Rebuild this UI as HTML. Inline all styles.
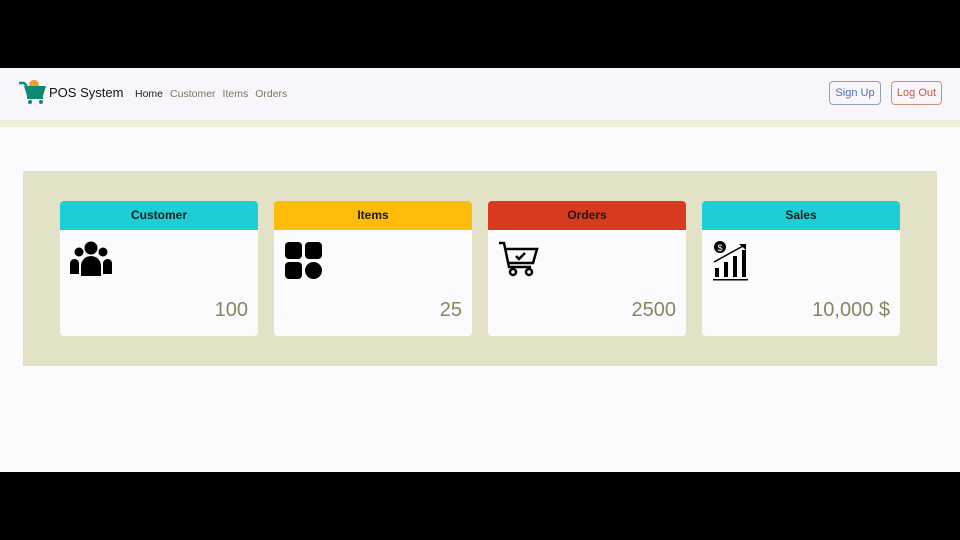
<!DOCTYPE html>
<html><head><meta charset="utf-8"><style>
*{box-sizing:border-box;margin:0;padding:0}
body{width:960px;height:540px;background:#000;font-family:"Liberation Sans",sans-serif;position:relative;overflow:hidden}
.page{position:absolute;left:0;top:68px;width:960px;height:404px;background:#fbfbfd}
.nav{position:absolute;left:0;top:0;width:960px;height:52px;background:#f8f6fa}
.navline{position:absolute;left:0;top:52px;width:960px;height:7px;background:#eeedd6}
.brand{position:absolute;left:49px;top:17px;font-size:13px;color:#111}
.links{position:absolute;left:135px;top:20px;font-size:10.5px;color:#7a7560}
.links span{margin-right:7px}
.btn{position:absolute;top:13px;height:24px;border:1px solid;border-radius:4px;font-size:11px;line-height:22px;text-align:center}
.band{position:absolute;left:23px;top:103px;width:914px;height:195px;background:#e3e2c6}
.card{position:absolute;top:133px;width:198px;height:135px;background:#fbfbfd;border-radius:4px;overflow:hidden}
.card .h{height:29px;text-align:center;font-weight:bold;font-size:12px;line-height:28px;color:#1a1a1a}
.card .n{position:absolute;right:10px;bottom:16px;font-size:20px;color:#8a8560;line-height:20px}
.card svg{position:absolute;left:10px;top:40px}
</style></head><body>
<div class="page">
<div class="nav">
<svg style="position:absolute;left:19px;top:11px" width="28" height="26" viewBox="0 0 28 26"><circle cx="15" cy="6" r="5" fill="#f0a020"/><path d="M0 4h5l3 3" stroke="#0d8a75" stroke-width="2.5" fill="none"/><path d="M5 7h22l-3 10H8z" fill="#0d8a75"/><rect x="8" y="17" width="16" height="3" fill="#0d8a75"/><circle cx="11" cy="23" r="2" fill="#0d8a75"/><circle cx="22" cy="23" r="2" fill="#0d8a75"/></svg>
<div class="brand">POS System</div>
<div class="links"><span style="color:#222">Home</span><span>Customer</span><span>Items</span><span>Orders</span></div>
<div class="btn" style="left:829px;width:52px;border-color:#8ea0c0;color:#4a70b0">Sign Up</div>
<div class="btn" style="left:891px;width:51px;border-color:#d09070;color:#c05a40">Log Out</div>
</div>
<div class="navline"></div>
<div class="band"></div>
<div class="card" style="left:60px"><div class="h" style="background:#1ccfd5">Customer</div>
<svg width="42" height="38" viewBox="0 0 42 38"><circle cx="21" cy="7" r="6.5"/><circle cx="9" cy="11" r="4.5"/><circle cx="33" cy="11" r="4.5"/><path d="M11 35V25a10 10 0 0 1 20 0v10z"/><path d="M0 33V23a4 4 0 0 1 9-1v11zM33 33V22a4 4 0 0 1 9 1v10z"/></svg>
<div class="n">100</div></div>
<div class="card" style="left:274px"><div class="h" style="background:#fdbb0a">Items</div>
<svg width="40" height="40" viewBox="0 0 40 40"><rect x="1" y="1" width="17" height="17" rx="4"/><rect x="21" y="1" width="17" height="17" rx="4"/><rect x="1" y="21" width="17" height="17" rx="4"/><circle cx="29.5" cy="29.5" r="8.5"/></svg>
<div class="n">25</div></div>
<div class="card" style="left:488px"><div class="h" style="background:#d83a20">Orders</div>
<svg width="42" height="38" viewBox="0 0 42 38" fill="none" stroke="#000" stroke-width="2.5"><path d="M1 2h5l5 24h22"/><path d="M8 8h31l-4 14H11"/><path d="M18 15l3 3 6-6"/><circle cx="15" cy="31" r="3"/><circle cx="31" cy="31" r="3"/></svg>
<div class="n">2500</div></div>
<div class="card" style="left:702px"><div class="h" style="background:#1ccfd5">Sales</div>
<svg width="38" height="40" viewBox="0 0 38 40"><circle cx="8" cy="6" r="6"/><text x="8" y="10" font-size="9" fill="#fff" text-anchor="middle" font-family="Liberation Sans">$</text><path d="M2 21L31 5" stroke="#000" stroke-width="1.5" fill="none"/><path d="M27 3h7v6z"/><rect x="3" y="27" width="4" height="9"/><rect x="12" y="21" width="4" height="15"/><rect x="21" y="15" width="4" height="21"/><rect x="30" y="9" width="4" height="27"/><rect x="1" y="38" width="35" height="1.5"/></svg>
<div class="n">10,000 $</div></div>
</div>
</body></html>
